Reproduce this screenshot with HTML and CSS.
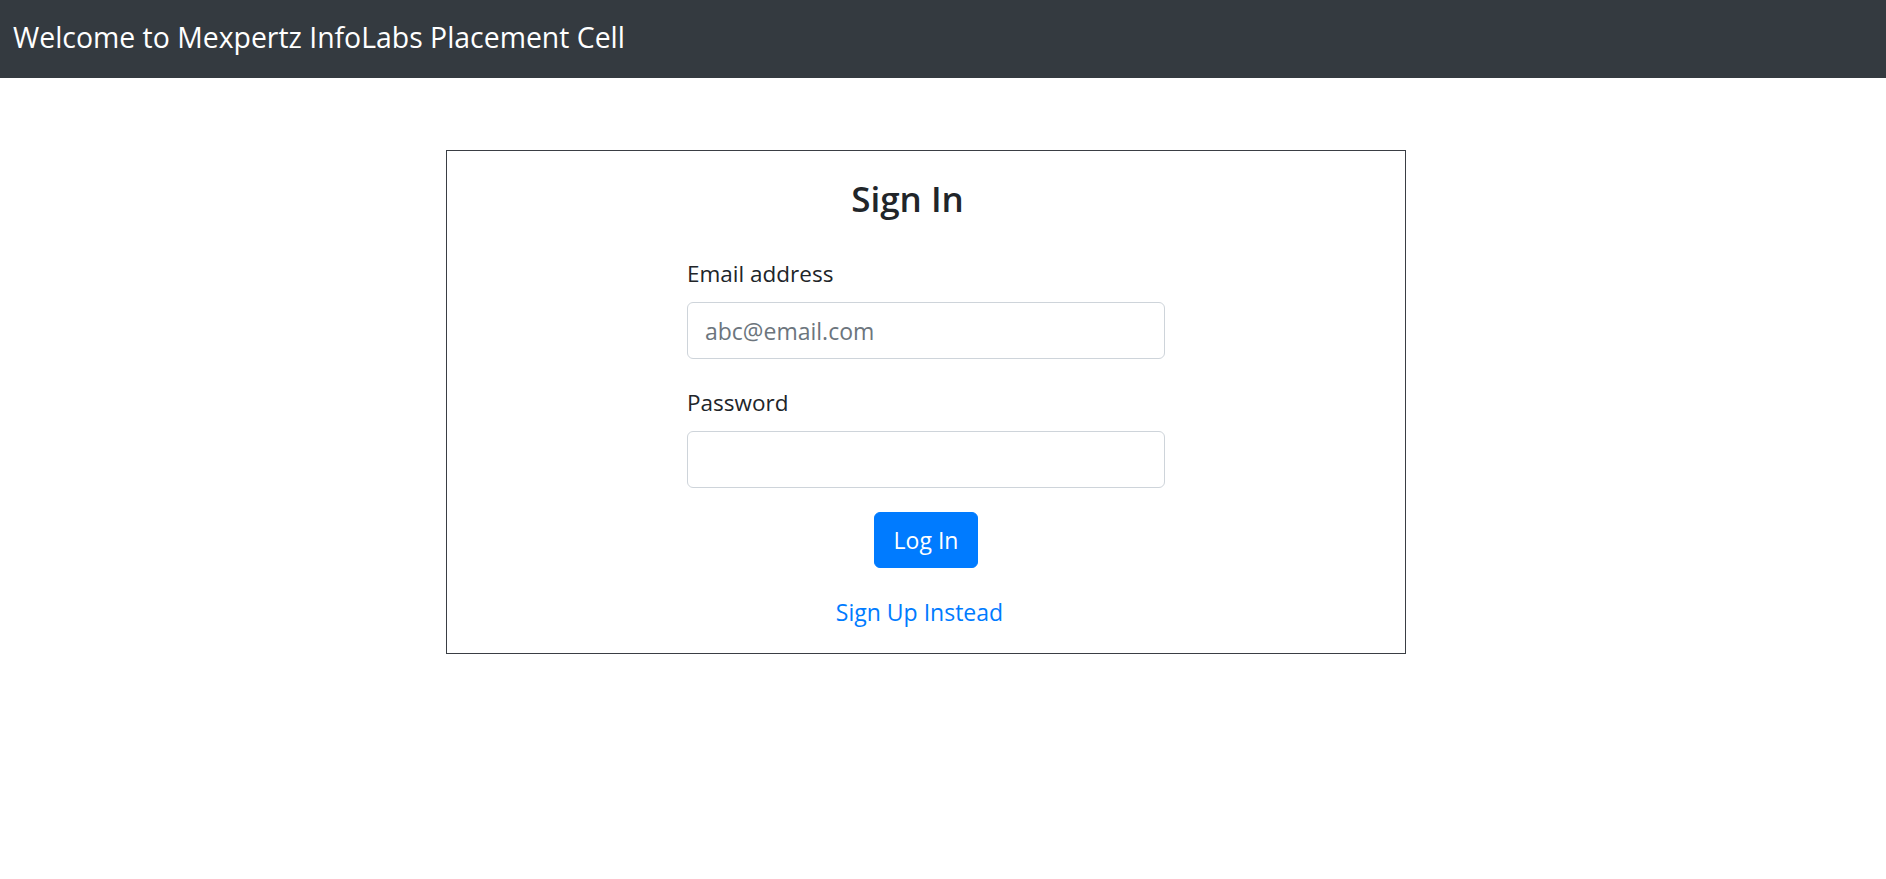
FILE: index.html
```html
<!DOCTYPE html>
<html lang="en">
<head>
<meta charset="utf-8">
<title>Sign In</title>
<link rel="stylesheet" href="styles.css">
</head>
<body>
<nav class="navbar">
  <span class="brand">Welcome to Mexpertz InfoLabs Placement Cell</span>
</nav>
<main class="page">
  <section class="card">
    <h2 class="title">Sign In</h2>
    <form class="form">
      <div class="group">
        <label class="label" for="email">Email address</label>
        <input class="input" id="email" type="email" placeholder="abc@email.com">
      </div>
      <div class="group">
        <label class="label" for="password">Password</label>
        <input class="input" id="password" type="password">
      </div>
      <div class="actions">
        <button class="btn" type="button">Log In</button>
      </div>
      <div class="alt">
        <a class="link" href="#">Sign Up Instead</a>
      </div>
    </form>
  </section>
</main>
</body>
</html>
```
FILE: styles.css
```css
* { box-sizing: border-box; }
html, body { margin: 0; padding: 0; background: #fff; }
body {
  font-family: "Open Sans", "Noto Sans", "Liberation Sans", sans-serif;
  font-size: 22.5px;
  line-height: 36px;
  color: #212529;
}
.navbar {
  height: 78px;
  background: #343a40;
  padding: 16px 13px 20px;
}
.brand {
  display: block;
  color: #fff;
  font-size: 28.4px;
  line-height: 42px;
  white-space: nowrap;
}
.page {
  padding-top: 72px;
}
.card {
  width: 960px;
  margin-left: 446px;
  border: 1px solid #3a3e44;
  padding: 26px 0 22px;
}
.title {
  margin: 0 0 34px;
  padding-right: 37px;
  text-align: center;
  font-size: 35px;
  line-height: 43px;
  font-weight: 600;
  color: #212529;
}
.form {
  width: 478px;
  margin: 0 auto;
}
.group {
  margin-bottom: 24px;
}
.label {
  display: block;
  padding-top: 2px;
  margin-bottom: 10px;
}
.input {
  display: block;
  width: 100%;
  height: 57px;
  padding: 9px 17px;
  font: inherit;
  font-size: 23px;
  color: #495057;
  background: #fff;
  border: 1px solid #ced4da;
  border-radius: 6px;
  outline: none;
}
.input::placeholder { color: #6c757d; opacity: 1; }
.actions {
  display: flex;
  justify-content: center;
  margin-bottom: 24px;
}
.btn {
  height: 56px;
  min-width: 104px;
  padding: 9px 18px;
  font: inherit;
  font-size: 23px;
  color: #fff;
  background: #007bff;
  border: 1px solid #007bff;
  border-radius: 6px;
}
.alt {
  text-align: center;
  padding-top: 2px;
  padding-right: 13px;
}
.link {
  font-size: 23px;
  color: #007bff;
  text-decoration: none;
}
```
